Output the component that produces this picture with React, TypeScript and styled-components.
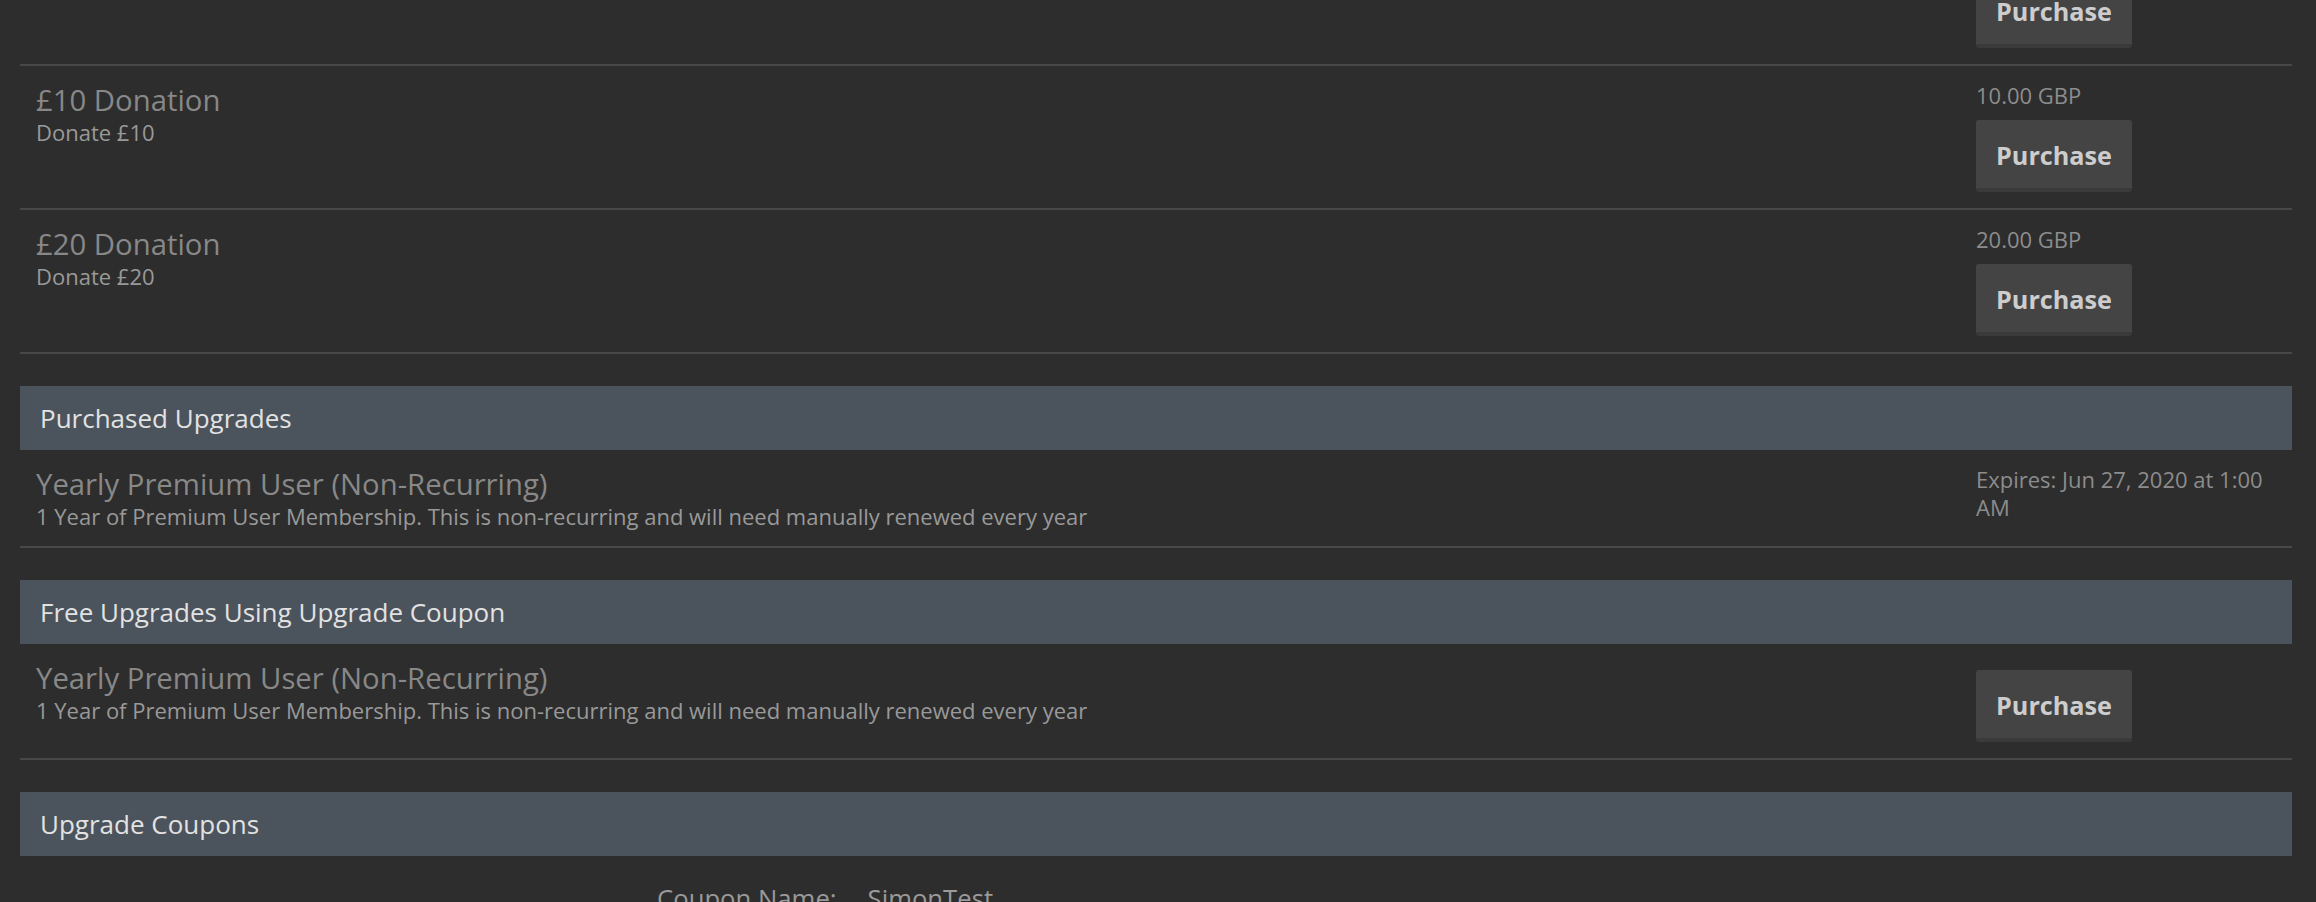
import React from "react";
import styled, { createGlobalStyle } from "styled-components";

const GlobalStyle = createGlobalStyle`
  html, body {
    margin: 0;
    padding: 0;
    background: #2d2d2d;
    overflow: hidden;
  }
  body {
    font-family: "Open Sans", "Noto Sans", "Liberation Sans", sans-serif;
    color: #999;
  }
  * { box-sizing: border-box; }
`;

const Page = styled.div`
  margin-top: -78px;
  padding: 0 24px 0 20px;
`;

const Section = styled.section`
  display: flex;
  flex-direction: column;
`;

const SectionHeader = styled.h2`
  margin: 32px 0 0;
  height: 64px;
  line-height: 64px;
  padding: 0 20px;
  background: #4b535c;
  color: #e2e2e2;
  font-size: 26px;
  font-weight: 400;
`;

const Row = styled.div`
  display: flex;
  align-items: flex-start;
  padding: 16.3px 16px;
  border-bottom: 2px solid #484848;
`;

const Info = styled.div`
  flex: 1;
  min-width: 0;
`;

const Title = styled.div`
  font-size: 29.3px;
  line-height: 37px;
  color: #888888;
`;

const Desc = styled.div`
  font-size: 22px;
  line-height: 26.4px;
  color: #999999;
`;

const Side = styled.div`
  width: 300px;
  flex: none;
  display: flex;
  flex-direction: column;
  align-items: flex-start;
`;

const Note = styled.div`
  font-size: 22px;
  line-height: 27.7px;
  color: #8c8c8c;
`;

const PurchaseButton = styled.button`
  margin-top: 9.7px;
  height: 72px;
  width: 156px;
  padding: 3px 0 0;
  border: none;
  border-bottom: 4px solid #3a3a3a;
  border-radius: 3px;
  background: #444444;
  color: #cdcdcd;
  font-family: "Open Sans", "Noto Sans", "Liberation Sans", sans-serif;
  font-size: 25.2px;
  font-weight: 700;
  line-height: 65px;
  cursor: pointer;
`;

const CouponForm = styled.div`
  display: grid;
  grid-template-columns: auto auto;
  justify-content: start;
  column-gap: 31px;
  padding: 25px 0 0 637px;
  font-size: 25.7px;
  line-height: 36px;
  color: #999999;
`;

const CouponLabel = styled.div`
  text-align: right;
`;

const CouponValue = styled.div`
  color: #9a9a9a;
`;

type Item = {
  title: string;
  desc: string;
  note?: string;
  purchase?: boolean;
};

const donations: Item[] = [
  { title: "£5 Donation", desc: "Donate £5", note: "5.00 GBP", purchase: true },
  { title: "£10 Donation", desc: "Donate £10", note: "10.00 GBP", purchase: true },
  { title: "£20 Donation", desc: "Donate £20", note: "20.00 GBP", purchase: true },
];

const yearly = {
  title: "Yearly Premium User (Non-Recurring)",
  desc: "1 Year of Premium User Membership. This is non-recurring and will need manually renewed every year",
};

const UpgradeRow: React.FC<{ item: Item }> = ({ item }) => (
  <Row>
    <Info>
      <Title>{item.title}</Title>
      <Desc>{item.desc}</Desc>
    </Info>
    <Side>
      {item.note && <Note>{item.note}</Note>}
      {item.purchase && <PurchaseButton>Purchase</PurchaseButton>}
    </Side>
  </Row>
);

export default function App() {
  return (
    <>
      <GlobalStyle />
      <Page>
        <Section>
          {donations.map((d) => (
            <UpgradeRow key={d.title} item={d} />
          ))}
        </Section>
        <Section>
          <SectionHeader>Purchased Upgrades</SectionHeader>
          <UpgradeRow item={{ ...yearly, note: "Expires: Jun 27, 2020 at 1:00 AM" }} />
        </Section>
        <Section>
          <SectionHeader>Free Upgrades Using Upgrade Coupon</SectionHeader>
          <UpgradeRow item={{ ...yearly, purchase: true }} />
        </Section>
        <Section>
          <SectionHeader>Upgrade Coupons</SectionHeader>
          <CouponForm>
            <CouponLabel>Coupon Name:</CouponLabel>
            <CouponValue>SimonTest</CouponValue>
            <CouponLabel>Upgrade:</CouponLabel>
            <CouponValue>Yearly Premium User (Non-Recurring)</CouponValue>
          </CouponForm>
        </Section>
      </Page>
    </>
  );
}
